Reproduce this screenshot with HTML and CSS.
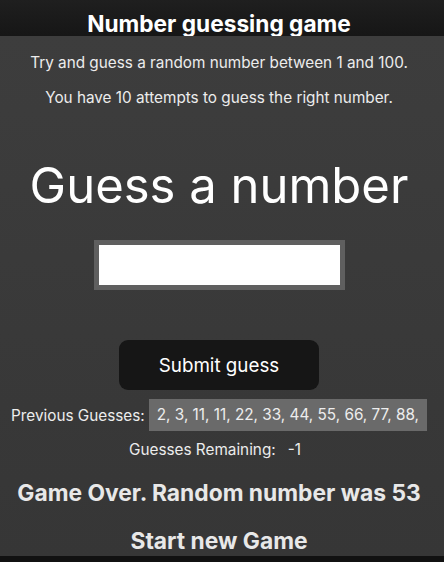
FILE: index.html
```html
<!DOCTYPE html>
<html lang="en">
<head>
<meta charset="utf-8">
<title>Number guessing game</title>
<link rel="stylesheet" href="styles.css">
</head>
<body>
<header class="topbar"><h1 class="title">Number guessing game</h1></header>
<main class="game">
  <p class="intro intro-first">Try and guess a random number between 1 and 100.</p>
  <p class="intro intro-second">You have 10 attempts to guess the right number.</p>
  <h2 class="prompt">Guess a number</h2>
  <input class="guess-field" type="text" aria-label="Guess">
  <button class="submit" type="button">Submit guess</button>
  <div class="prev-row"><span class="prev-label">Previous Guesses:</span><span class="prev-list">2, 3, 11, 11, 22, 33, 44, 55, 66, 77, 88,</span></div>
  <p class="remaining"><span>Guesses Remaining:</span><span class="remaining-num">-1</span></p>
  <p class="status">Game Over. Random number was 53</p>
  <p class="status restart">Start new Game</p>
</main>
<footer class="bottombar"></footer>
</body>
</html>
```
FILE: styles.css
```css
html, body { height: 100%; }
body {
  margin: 0;
  background: #3a3a3a;
  color: #f2f2f2;
  font-family: Inter, "Noto Sans", sans-serif;
  display: flex;
  flex-direction: column;
  overflow: hidden;
}
.topbar {
  height: 36px;
  background: linear-gradient(#1f1f1f, #161616);
  display: flex;
  align-items: flex-end;
  justify-content: center;
  padding-right: 6px;
}
.title {
  margin: 0;
  font-size: 22.7px;
  font-weight: 700;
  line-height: 24px;
  color: #fff;
}
.game {
  flex: 1;
  display: flex;
  flex-direction: column;
  align-items: center;
  padding-right: 6px;
  background: linear-gradient(#3d3d3d, #363636);
}
.intro {
  margin: 0;
  font-size: 15.3px;
  line-height: 20px;
  color: #ececec;
}
.intro-first { margin-top: 17px; }
.intro-second { margin-top: 15px; }
.prompt {
  margin: 49px 0 0;
  font-size: 49px;
  font-weight: 400;
  line-height: 58px;
  color: #fff;
}
.guess-field {
  margin-top: 25px;
  width: 251px;
  height: 50px;
  box-sizing: border-box;
  border: 5px solid #5f5f5f;
  background: #fff;
  padding: 0;
  outline: none;
}
.submit {
  margin-top: 50px;
  width: 200px;
  height: 50px;
  border: none;
  border-radius: 9px;
  background: #161616;
  color: #fff;
  font-family: inherit;
  font-size: 18.8px;
}
.prev-row {
  margin-top: 9px;
  display: flex;
  align-items: center;
  gap: 4px;
  font-size: 15.3px;
  color: #ededed;
}
.prev-list {
  background: #6a6a6a;
  height: 32px;
  line-height: 32px;
  padding: 0 8px;
}
.remaining {
  margin: 9px 0 0;
  font-size: 15.3px;
  line-height: 20px;
  color: #ececec;
  display: flex;
  gap: 12px;
  padding-right: 8px;
}
.status {
  margin: 19px 0 0;
  font-size: 22.8px;
  font-weight: 700;
  line-height: 28px;
  color: #e8e8e8;
}
.restart { margin-top: 20px; }
.bottombar {
  height: 6px;
  background: #111;
}
```
